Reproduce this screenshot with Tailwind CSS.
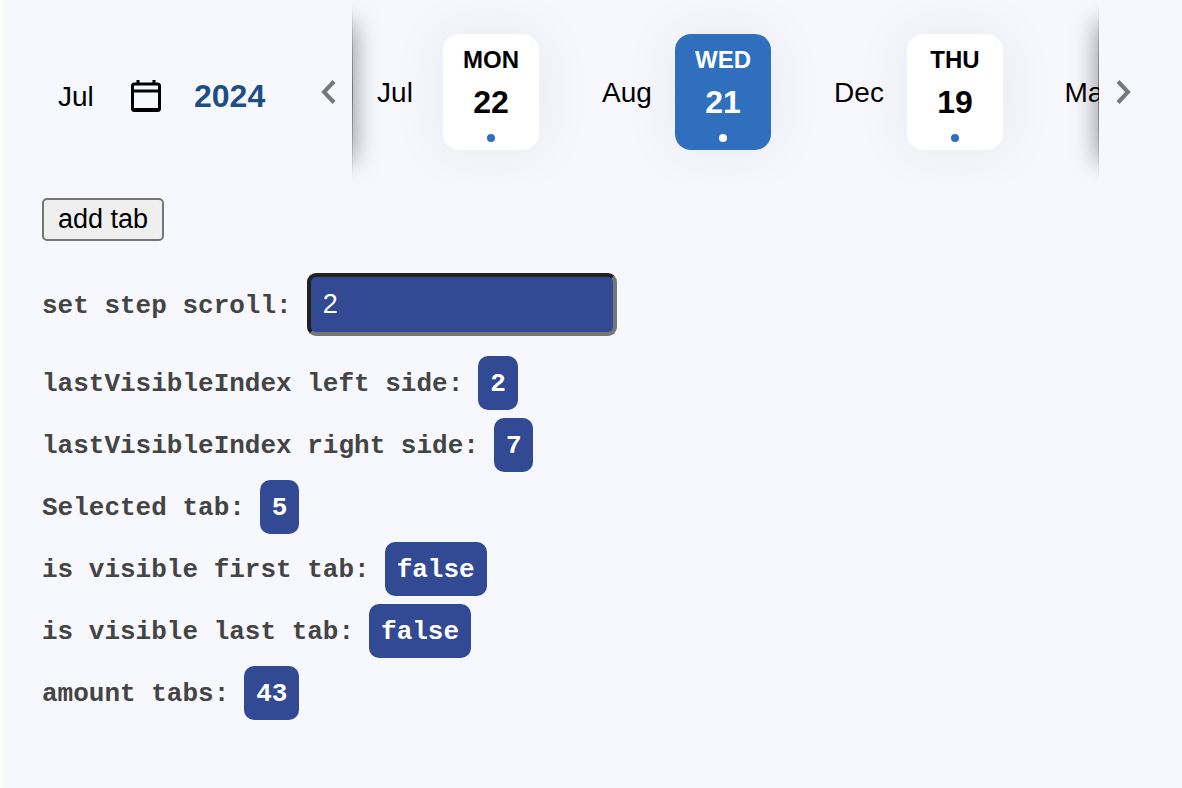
<!DOCTYPE html>
<html lang="en">
<head>
<meta charset="utf-8">
<meta name="viewport" content="width=device-width, initial-scale=1">
<title>Date tabs</title>
<script src="https://cdn.jsdelivr.net/npm/@tailwindcss/browser@4"></script>
</head>
<body class="min-h-screen border-l-2 border-white bg-[#f7f8fe] font-['Liberation_Sans',Arial,sans-serif] text-black">
<header class="flex h-[184px] items-center">
  <div class="flex w-[302px] shrink-0 items-center pt-2 pl-14">
    <span class="w-[70px] pt-0.5 text-[28px] leading-8">Jul</span>
    <button type="button" aria-label="Open calendar" class="w-[66px]">
      <svg class="h-9 w-9" viewBox="0 0 36 36" fill="none" stroke="#000" stroke-width="3">
        <rect x="4.500" y="6" width="27" height="26.500" rx="2"/>
        <path d="M4 13h28M10 2v5M26 2v5"/>
        <path d="M4 31.500h28"/>
      </svg>
    </button>
    <span class="text-[32px] leading-8 font-bold text-[#1e4e86]">2024</span>
  </div>
  <button type="button" aria-label="Scroll left" class="flex w-12 shrink-0 justify-center">
    <svg class="h-6 w-4" viewBox="0 0 16 24" fill="none" stroke="#777" stroke-width="4"><path d="M14 1.500 4 12 14 22.500"/></svg>
  </button>
  <div class="relative h-full min-w-0 flex-1 overflow-hidden">
    <nav aria-label="Dates" class="flex h-full items-center gap-[45px]">
      <div class="flex shrink-0 items-center gap-[5px]">
        <span class="w-[86px] pt-0.5 text-center text-[28px] leading-8">Jul</span>
        <button type="button" class="flex h-[116px] w-24 flex-col items-center rounded-2xl bg-white pt-2.5 shadow-[0_0_60px_rgba(0,0,0,0.07)]">
          <span class="text-2xl font-bold">MON</span>
          <span class="mt-1.5 text-[32px] leading-10 font-bold">22</span>
          <span class="mt-3 size-2 rounded-full bg-[#2f6fbe]"></span>
        </button>
      </div>
      <div class="flex shrink-0 items-center gap-[5px]">
        <span class="w-[86px] pt-0.5 text-center text-[28px] leading-8">Aug</span>
        <button type="button" class="flex h-[116px] w-24 flex-col items-center rounded-2xl bg-[#2f6fbe] pt-2.5 text-white shadow-[0_0_60px_rgba(0,0,0,0.07)]">
          <span class="text-2xl font-bold">WED</span>
          <span class="mt-1.5 text-[32px] leading-10 font-bold">21</span>
          <span class="mt-3 size-2 rounded-full bg-white"></span>
        </button>
      </div>
      <div class="flex shrink-0 items-center gap-[5px]">
        <span class="w-[86px] pt-0.5 text-center text-[28px] leading-8">Dec</span>
        <button type="button" class="flex h-[116px] w-24 flex-col items-center rounded-2xl bg-white pt-2.5 shadow-[0_0_60px_rgba(0,0,0,0.07)]">
          <span class="text-2xl font-bold">THU</span>
          <span class="mt-1.5 text-[32px] leading-10 font-bold">19</span>
          <span class="mt-3 size-2 rounded-full bg-[#2f6fbe]"></span>
        </button>
      </div>
      <span class="w-[86px] shrink-0 pt-0.5 text-center text-[28px] leading-8">May</span>
    </nav>
    <div class="pointer-events-none absolute inset-y-6 right-full w-5 shadow-[0_0_26px_rgba(0,0,0,0.5)]"></div>
    <div class="pointer-events-none absolute inset-y-6 left-full w-5 shadow-[0_0_26px_rgba(0,0,0,0.5)]"></div>
    <div class="pointer-events-none absolute inset-y-1 left-0 w-px bg-linear-to-b from-transparent via-black/40 to-transparent"></div>
    <div class="pointer-events-none absolute inset-y-1 right-0 w-px bg-linear-to-b from-transparent via-black/40 to-transparent"></div>
  </div>
  <button type="button" aria-label="Scroll right" class="mr-[35px] flex w-12 shrink-0 justify-center">
    <svg class="h-6 w-4" viewBox="0 0 16 24" fill="none" stroke="#777" stroke-width="4"><path d="M3 1.500 13 12 3 22.500"/></svg>
  </button>
</header>
<main class="px-10 pt-3.5 pb-16">
  <button type="button" class="block h-[43px] rounded-[5px] border-2 border-[#767676] bg-[#efefef] px-3.5 pb-0.5 text-[27px] leading-8">add tab</button>
  <div class="mt-8 font-['Liberation_Mono','Courier_New',monospace] text-[26px] leading-[52px] font-bold text-[#444]">
    <div class="mb-5 flex items-center gap-[15px]">
      <label for="step" class="pt-0.5">set step scroll:</label>
      <input id="step" type="text" value="2" class="h-[63px] w-[310px] rounded-[9px] border-4 border-t-[#212121] border-r-[#767676] border-b-[#767676] border-l-[#212121] bg-[#324a93] px-3 font-['Liberation_Sans',Arial,sans-serif] text-[27px] font-normal text-white">
    </div>
    <div class="flex flex-col gap-2">
      <p class="flex gap-[15px]"><span class="pt-0.5">lastVisibleIndex left side:</span><span class="rounded-[10px] bg-[#324a93] px-3 pt-0.5 text-white">2</span></p>
      <p class="flex gap-[15px]"><span class="pt-0.5">lastVisibleIndex right side:</span><span class="rounded-[10px] bg-[#324a93] px-3 pt-0.5 text-white">7</span></p>
      <p class="flex gap-[15px]"><span class="pt-0.5">Selected tab:</span><span class="rounded-[10px] bg-[#324a93] px-3 pt-0.5 text-white">5</span></p>
      <p class="flex gap-[15px]"><span class="pt-0.5">is visible first tab:</span><span class="rounded-[10px] bg-[#324a93] px-3 pt-0.5 text-white">false</span></p>
      <p class="flex gap-[15px]"><span class="pt-0.5">is visible last tab:</span><span class="rounded-[10px] bg-[#324a93] px-3 pt-0.5 text-white">false</span></p>
      <p class="flex gap-[15px]"><span class="pt-0.5">amount tabs:</span><span class="rounded-[10px] bg-[#324a93] px-3 pt-0.5 text-white">43</span></p>
    </div>
  </div>
</main>
</body>
</html>
